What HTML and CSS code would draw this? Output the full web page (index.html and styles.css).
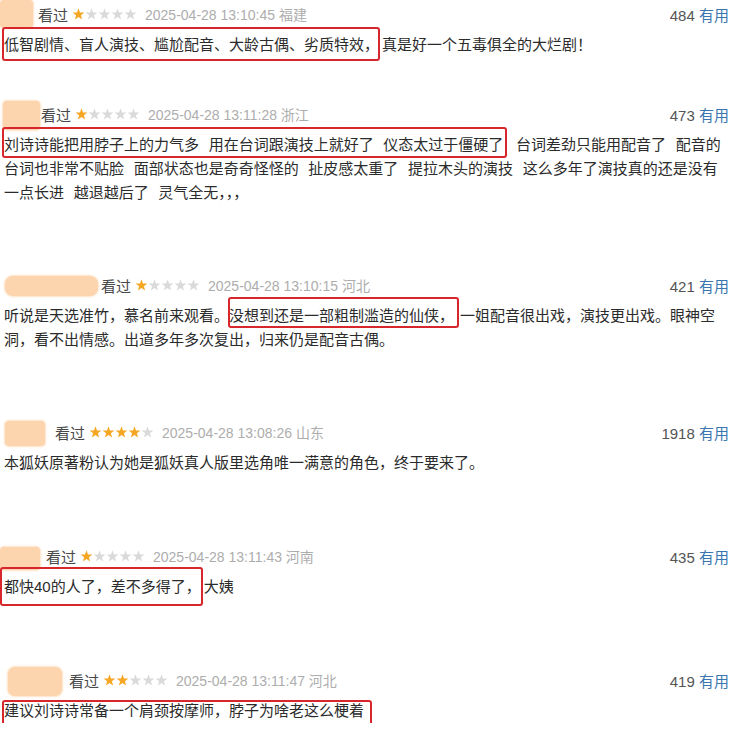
FILE: index.html
```html
<!DOCTYPE html>
<html lang="zh-CN">
<head>
  <meta charset="UTF-8">
  <meta name="viewport" content="width=device-width, initial-scale=1.0">
  <title>短评</title>
  <link rel="stylesheet" href="styles.css">
</head>
<body>
  <svg class="defs" width="0" height="0">
    <defs>
      <symbol id="star" viewBox="0 0 13 13">
        <polygon points="6.5,0.3 7.97,4.48 12.4,4.58 8.88,7.27 10.14,11.52 6.5,9 2.86,11.52 4.12,7.27 0.6,4.58 5.03,4.48"/>
      </symbol>
    </defs>
  </svg>

  <div class="reviews">
    <div class="review">
      <div class="review-head">
        <span class="name-blur nb1"></span>
        <span class="watched">看过</span>
        <svg class="stars" viewBox="0 0 65 13">
          <use href="#star" class="on" x="0" width="13" height="13"/>
          <use href="#star" x="13" width="13" height="13"/>
          <use href="#star" x="26" width="13" height="13"/>
          <use href="#star" x="39" width="13" height="13"/>
          <use href="#star" x="52" width="13" height="13"/>
        </svg>
        <span class="meta">2025-04-28 13:10:45 福建</span>
        <span class="votes"><span class="count">484</span> <span class="useful">有用</span></span>
      </div>
      <p class="review-text"><span class="mark mk1">低智剧情、盲人演技、尴尬配音、大龄古偶、劣质特效，</span>真是好一个五毒俱全的大烂剧！</p>
    </div>

    <div class="review">
      <div class="review-head">
        <span class="name-blur nb2"></span>
        <span class="watched">看过</span>
        <svg class="stars" viewBox="0 0 65 13">
          <use href="#star" class="on" x="0" width="13" height="13"/>
          <use href="#star" x="13" width="13" height="13"/>
          <use href="#star" x="26" width="13" height="13"/>
          <use href="#star" x="39" width="13" height="13"/>
          <use href="#star" x="52" width="13" height="13"/>
        </svg>
        <span class="meta">2025-04-28 13:11:28 浙江</span>
        <span class="votes"><span class="count">473</span> <span class="useful">有用</span></span>
      </div>
      <p class="review-text"><span class="mark mk2">刘诗诗能把用脖子上的力气多 用在台词跟演技上就好了 仪态太过于僵硬了</span> 台词差劲只能用配音了 配音的台词也非常不贴脸 面部状态也是奇奇怪怪的 扯皮感太重了 提拉木头的演技 这么多年了演技真的还是没有一点长进 越退越后了 灵气全无，，，</p>
    </div>

    <div class="review">
      <div class="review-head">
        <span class="name-blur nb3"></span>
        <span class="watched">看过</span>
        <svg class="stars" viewBox="0 0 65 13">
          <use href="#star" class="on" x="0" width="13" height="13"/>
          <use href="#star" x="13" width="13" height="13"/>
          <use href="#star" x="26" width="13" height="13"/>
          <use href="#star" x="39" width="13" height="13"/>
          <use href="#star" x="52" width="13" height="13"/>
        </svg>
        <span class="meta">2025-04-28 13:10:15 河北</span>
        <span class="votes"><span class="count">421</span> <span class="useful">有用</span></span>
      </div>
      <p class="review-text">听说是天选准竹，慕名前来观看。<span class="mark mk3">没想到还是一部粗制滥造的仙侠，</span>一姐配音很出戏，演技更出戏。眼神空洞，看不出情感。出道多年多次复出，归来仍是配音古偶。</p>
    </div>

    <div class="review">
      <div class="review-head">
        <span class="name-blur nb4"></span>
        <span class="watched">看过</span>
        <svg class="stars" viewBox="0 0 65 13">
          <use href="#star" class="on" x="0" width="13" height="13"/>
          <use href="#star" class="on" x="13" width="13" height="13"/>
          <use href="#star" class="on" x="26" width="13" height="13"/>
          <use href="#star" class="on" x="39" width="13" height="13"/>
          <use href="#star" x="52" width="13" height="13"/>
        </svg>
        <span class="meta">2025-04-28 13:08:26 山东</span>
        <span class="votes"><span class="count">1918</span> <span class="useful">有用</span></span>
      </div>
      <p class="review-text">本狐妖原著粉认为她是狐妖真人版里选角唯一满意的角色，终于要来了。</p>
    </div>

    <div class="review">
      <div class="review-head">
        <span class="name-blur nb5"></span>
        <span class="watched">看过</span>
        <svg class="stars" viewBox="0 0 65 13">
          <use href="#star" class="on" x="0" width="13" height="13"/>
          <use href="#star" x="13" width="13" height="13"/>
          <use href="#star" x="26" width="13" height="13"/>
          <use href="#star" x="39" width="13" height="13"/>
          <use href="#star" x="52" width="13" height="13"/>
        </svg>
        <span class="meta">2025-04-28 13:11:43 河南</span>
        <span class="votes"><span class="count">435</span> <span class="useful">有用</span></span>
      </div>
      <p class="review-text"><span class="mark mk5">都快40的人了，差不多得了，</span>大姨</p>
    </div>

    <div class="review">
      <div class="review-head">
        <span class="name-blur nb6"></span>
        <span class="watched">看过</span>
        <svg class="stars" viewBox="0 0 65 13">
          <use href="#star" class="on" x="0" width="13" height="13"/>
          <use href="#star" class="on" x="13" width="13" height="13"/>
          <use href="#star" x="26" width="13" height="13"/>
          <use href="#star" x="39" width="13" height="13"/>
          <use href="#star" x="52" width="13" height="13"/>
        </svg>
        <span class="meta">2025-04-28 13:11:47 河北</span>
        <span class="votes"><span class="count">419</span> <span class="useful">有用</span></span>
      </div>
      <p class="review-text"><span class="mark mk6">建议刘诗诗常备一个肩颈按摩师，脖子为啥老这么梗着</span></p>
    </div>
  </div>
</body>
</html>
```

FILE: styles.css
```css
body { margin: 0; background: #fff; font-family: "Liberation Sans", "Noto Sans CJK SC", sans-serif; color: #2b2b2b; }
.defs { display: block; width: 0; height: 0; overflow: hidden; }

.review { padding: 0 5px 0 4px; margin-bottom: 66px; }
.review:first-child { margin-bottom: 43px; }
.review:nth-child(4), .review:nth-child(5) { margin-bottom: 67px; }
.review:last-child { margin-bottom: 0; }

.review-head { display: flex; align-items: center; height: 28px; white-space: nowrap; }
.name-blur { display: block; flex-shrink: 0; background: #fcd4ae; border-radius: 4px; box-shadow: 0 0 2px 1px #fde2c8; }
.nb1 { width: 33px; height: 28px; margin: 0 5px 0 -4px; }
.nb2 { width: 37px; height: 29px; margin: 2px 1px 0 -1px; }
.nb3 { width: 93px; height: 20px; margin: 2px 3px 0 1px; border-radius: 8px; }
.nb4 { width: 40px; height: 25px; margin: 3px 10px 0 1px; }
.nb5 { width: 40px; height: 23px; margin: 4px 6px 0 -4px; }
.nb6 { width: 54px; height: 29px; margin: 3px 7px 0 4px; border-radius: 7px; }

.watched { font-size: 15px; color: #494949; margin-right: 4px; }
.stars { width: 65px; height: 13px; margin-right: 8px; flex-shrink: 0; }
.stars use { fill: #dadada; }
.stars .on { fill: #f5a623; }
.meta { font-size: 14px; color: #adadad; }
.votes { margin-left: auto; font-size: 15px; color: #555; }
.useful { color: #3a77b0; }

.review-text { margin: 5px 0 0; font-size: 15px; line-height: 24px; word-spacing: 5.5px; }
.mark { position: relative; margin-right: 3px; }
.mark::after { content: ""; position: absolute; border: 2px solid #d8262d; border-radius: 3px; top: -9px; bottom: -8px; left: -2px; right: -2px; }
.mk1::after { top: -9px; bottom: -8px; left: -2px; right: -1px; }
.mk2::after { top: -9px; bottom: -5px; left: -2px; right: -4px; }
.mk3 { margin-right: 6px; }
.mk3::after { top: -10px; bottom: -4px; left: -1px; right: -5px; }
.mk5::after { top: -11px; bottom: -11px; left: -4px; right: -2px; }
.mk6::after { top: -2px; bottom: -7px; left: -2px; right: -8px; }
```
